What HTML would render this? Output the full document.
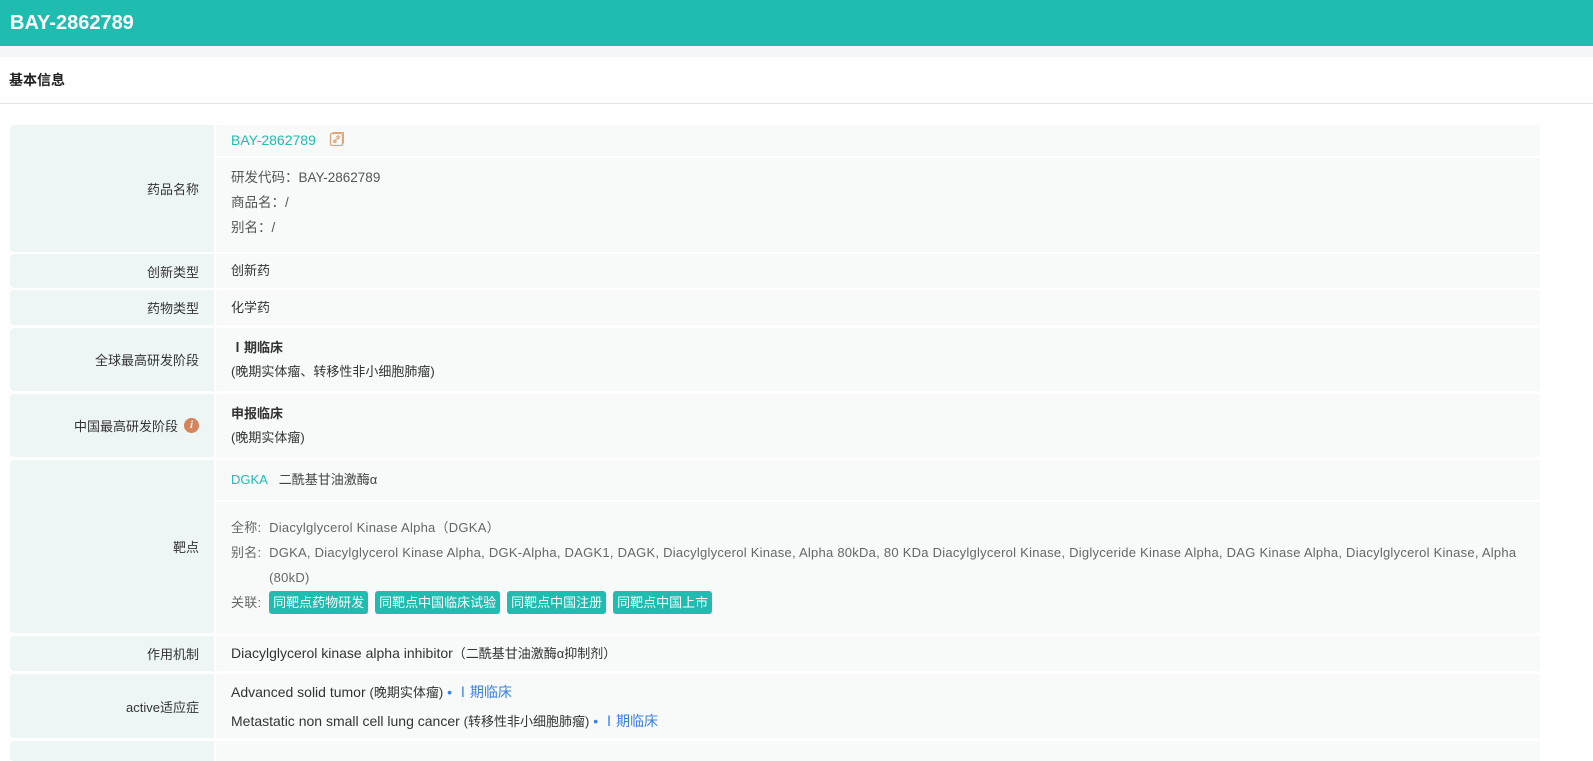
<!DOCTYPE html>
<html><head><meta charset="utf-8"><style>
*{margin:0;padding:0;box-sizing:border-box}
body{width:1593px;height:756px;overflow:hidden;background:#fff;font-family:"Liberation Sans","Noto Sans CJK SC",sans-serif;font-size:13px;color:#333;position:relative}
.hdr{position:absolute;left:0;top:0;width:1593px;height:46px;background:#1fbcb0;color:#fff;font-weight:bold;font-size:20px;line-height:46px;padding-left:10px}
.gap{position:absolute;left:0;top:46px;width:1593px;height:11px;background:#f5f6f8}
.ttl{position:absolute;left:0;top:57px;width:1593px;height:47px;border-bottom:1px solid #e4e4e4;font-weight:bold;font-size:14px;line-height:46px;padding-left:9px;color:#222;border-top-right-radius:6px}
.l{position:absolute;left:10px;width:204px;background:#eef6f5;text-align:right;padding-right:15px;display:flex;align-items:center;justify-content:flex-end;border-radius:4px 0 0 4px;color:#333}
.v{position:absolute;left:216px;width:1324px;background:#f8fafa;padding-left:15px;color:#555}
.t{color:#1fbcb0}
.b{font-weight:bold;color:#333}
.tag{display:inline-block;background:#1fbcb0;color:#fff;border-radius:3px;padding:0 4px;height:23px;line-height:23px;margin-right:7px;font-size:13px;letter-spacing:0}
.ph{color:#3a7ee8}
</style></head><body>
<div class="hdr">BAY-2862789</div>
<div class="gap"></div>
<div class="ttl">基本信息</div>

<div class="l" style="top:125px;height:127px">药品名称</div>
<div class="v" style="top:125px;height:31px;line-height:31px"><span class="t" style="font-size:14px">BAY-2862789</span>
<svg width="16" height="16" viewBox="0 0 16 16" style="vertical-align:-2px;margin-left:10px"><rect x="1.5" y="2.5" width="12" height="12" rx="1.5" fill="none" stroke="#e0a47a" stroke-width="1.3"/><path d="M4 3V1.5h10.5V12H13" fill="none" stroke="#e0a47a" stroke-width="1"/><path d="M5.5 10.5l4-4M6 8.5l-1 1a1.2 1.2 0 0 0 1.7 1.7l1-1M9 8l1-1A1.2 1.2 0 0 0 8.3 5.3l-1 1" fill="none" stroke="#e0a47a" stroke-width="1.1"/></svg></div>
<div class="v" style="top:158px;height:94px;padding-top:7px;line-height:25px;font-size:13.5px">研发代码：BAY-2862789<br>商品名：/<br>别名：/</div>

<div class="l" style="top:254px;height:34px">创新类型</div>
<div class="v" style="top:254px;height:34px;line-height:34px;color:#333">创新药</div>
<div class="l" style="top:290px;height:35px">药物类型</div>
<div class="v" style="top:290px;height:35px;line-height:35px;color:#333">化学药</div>

<div class="l" style="top:328px;height:63px">全球最高研发阶段</div>
<div class="v" style="top:328px;height:63px;padding-top:8px;line-height:24px;color:#333"><span class="b">Ⅰ期临床</span><br>(晚期实体瘤、转移性非小细胞肺瘤)</div>

<div class="l" style="top:394px;height:63px">中国最高研发阶段<span style="display:inline-block;width:15px;height:15px;border-radius:50%;background:#d4835a;color:#fff;font-size:11px;font-style:italic;font-weight:bold;line-height:15px;text-align:center;margin-left:6px;font-family:'Liberation Serif',serif">i</span></div>
<div class="v" style="top:394px;height:63px;padding-top:8px;line-height:24px;color:#333"><span class="b">申报临床</span><br>(晚期实体瘤)</div>

<div class="l" style="top:460px;height:173px">靶点</div>
<div class="v" style="top:460px;height:40px;line-height:40px"><span class="t">DGKA</span>&nbsp;&nbsp; <span style="color:#444">二酰基甘油激酶α</span></div>
<div class="v" style="top:502px;height:131px;padding-top:13px;padding-right:12px;line-height:25px;font-size:13px;letter-spacing:0.25px;color:#666">
<div>全称:&nbsp; Diacylglycerol Kinase Alpha（DGKA）</div>
<div style="display:flex"><span style="flex:none">别名:&nbsp;&nbsp;</span><span>DGKA, Diacylglycerol Kinase Alpha, DGK-Alpha, DAGK1, DAGK, Diacylglycerol Kinase, Alpha 80kDa, 80 KDa Diacylglycerol Kinase, Diglyceride Kinase Alpha, DAG Kinase Alpha, Diacylglycerol Kinase, Alpha (80kD)</span></div>
<div>关联:&nbsp; <span class="tag">同靶点药物研发</span><span class="tag">同靶点中国临床试验</span><span class="tag">同靶点中国注册</span><span class="tag">同靶点中国上市</span></div>
</div>

<div class="l" style="top:636px;height:35px">作用机制</div>
<div class="v" style="top:636px;height:35px;line-height:35px;color:#333;font-size:14px">Diacylglycerol kinase alpha inhibitor<span style="font-size:13px">（二酰基甘油激酶α抑制剂）</span></div>

<div class="l" style="top:674px;height:64px">active适应症</div>
<div class="v" style="top:674px;height:64px;padding-top:4px;line-height:29px;color:#333;font-size:14px">Advanced solid tumor <span style="font-size:13px">(晚期实体瘤)</span> <span class="ph">• Ⅰ期临床</span><br>Metastatic non small cell lung cancer <span style="font-size:13px">(转移性非小细胞肺瘤)</span> <span class="ph">• Ⅰ期临床</span></div>

<div class="l" style="top:741px;height:20px"></div>
<div class="v" style="top:741px;height:20px"></div>
</body></html>
